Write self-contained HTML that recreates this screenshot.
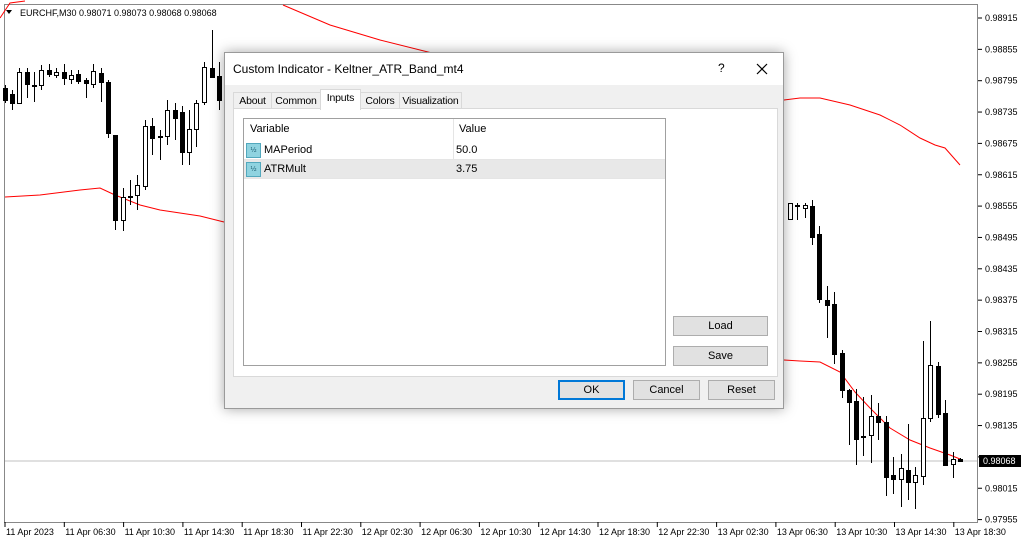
<!DOCTYPE html>
<html><head><meta charset="utf-8"><style>
body{margin:0;width:1024px;height:544px;overflow:hidden;background:#fff;font-family:"Liberation Sans",sans-serif;position:relative}
.dlg{position:absolute;left:224px;top:52px;width:558px;height:355px;background:#f0f0f0;border:1px solid #9a9a9a;box-shadow:0 0 12px rgba(0,0,0,.35);font-size:11px;color:#000}
.title{position:absolute;left:0;top:0;width:558px;height:32px;background:#fff}
.title span{position:absolute;left:8px;top:9px;font-size:12px}
.tab{position:absolute;top:39px;height:16px;border:1px solid #d9d9d9;border-bottom:none;background:#f0f0f0;text-align:center;line-height:16px;font-size:10.5px;letter-spacing:-0.2px;white-space:nowrap}
.panel{position:absolute;left:8px;top:55px;width:543px;height:267px;background:#fff;border:1px solid #d9d9d9}
.grid{position:absolute;left:9px;top:9px;width:421px;height:246px;border:1px solid #a0a0a0;background:#fff}
.row{position:absolute;left:0;width:421px;height:18px;line-height:18px;border-bottom:1px solid #e5e5e5}
.btn{position:absolute;height:18px;border:1px solid #adadad;background:#e1e1e1;text-align:center;line-height:18px}
.ic{position:absolute;left:2px;top:2px;width:13px;height:13px;background:#8fd3e0;border:1px solid #52a8bd;font-size:7px;line-height:13px;text-align:center;color:#1c5f73}
</style></head><body>
<svg id="ch" width="1024" height="544" style="position:absolute;left:0;top:0">
<rect x="4.5" y="4.5" width="973" height="518" fill="none" stroke="#888"/>
<line x1="5" y1="461" x2="977" y2="461" stroke="#c0c0c0"/>
<polyline fill="none" stroke="#f00" points="0,18 10,3 25,1"/>
<polyline fill="none" stroke="#f00" points="283,5 330,25 380,40 440,55"/>
<polyline fill="none" stroke="#f00" points="784,100 800,98 820,98 850,105 880,115 900,125 920,138 935,145 945,148 960,165"/>
<polyline fill="none" stroke="#f00" points="5,197 40,195 80,190 100,188 115,195 140,205 160,210 200,216 224,222"/>
<polyline fill="none" stroke="#f00" points="784,360 800,361 820,362 840,372 855,392 870,408 890,428 910,440 930,448 950,455 960,459"/>
<g id="cd"></g>
<text x="20" y="16" font-size="9" font-family="Liberation Sans">EURCHF,M30  0.98071 0.98073 0.98068 0.98068</text>
<polygon points="6,10 12,10 9,14" fill="#000"/>
<g id="ax" font-size="9" font-family="Liberation Sans"></g>
<rect x="979" y="455" width="42" height="12" fill="#000"/>
<text x="983" y="464" font-size="9" fill="#fff" font-family="Liberation Sans">0.98068</text>
</svg>
<div class="dlg">
<div class="title"><span>Custom Indicator - Keltner_ATR_Band_mt4</span>
<span style="left:493px;top:8px">?</span>
<svg style="position:absolute;left:531px;top:10px" width="12" height="12"><path d="M1 1L11 11M11 1L1 11" stroke="#000" stroke-width="1.2"/></svg></div>
<div class="tab" style="left:8px;width:37px">About</div>
<div class="tab" style="left:46px;width:48px">Common</div>
<div class="tab" style="left:135px;width:38px">Colors</div>
<div class="tab" style="left:174px;width:61px">Visualization</div>
<div class="panel">
<div class="grid">
<div class="row" style="top:0;height:21px;line-height:21px;border-bottom:none"><span style="position:absolute;left:6px">Variable</span><span style="position:absolute;left:215px">Value</span></div>
<div style="position:absolute;left:209px;top:0;width:1px;height:60px;background:#e5e5e5"></div>
<div class="row" style="top:22px"><div class="ic">½</div><span style="position:absolute;left:20px">MAPeriod</span><span style="position:absolute;left:212px">50.0</span></div>
<div class="row" style="top:41px;background:#e8e8e8"><div class="ic">½</div><span style="position:absolute;left:20px">ATRMult</span><span style="position:absolute;left:212px">3.75</span></div>
</div>
<div class="btn" style="left:439px;top:207px;width:93px">Load</div>
<div class="btn" style="left:439px;top:237px;width:93px">Save</div>
</div>
<div class="tab" style="left:95px;top:36px;width:39px;height:20px;background:#fff;z-index:2">Inputs</div>
<div class="btn" style="left:333px;top:327px;width:65px;border-color:#0078d7;box-shadow:inset 0 0 0 1px #0078d7">OK</div>
<div class="btn" style="left:408px;top:327px;width:65px">Cancel</div>
<div class="btn" style="left:483px;top:327px;width:65px">Reset</div>
</div>
<script>
var c=[[5,88,100,85,103,0],[12,94,103,90,110,0],[19,72,103,68,103,1],[27,72,84,68,98,0],[34,85,86,72,102,1],[41,70,85,65,90,1],[49,70,74,64,77,0],[56,72,75,68,78,1],[64,72,78,64,85,0],[71,75,79,70,84,1],[78,74,81,70,84,0],[86,80,83,78,98,0],[93,71,84,64,88,1],[101,73,82,68,102,0],[108,82,133,80,138,0],[115,135,220,135,230,0],[123,197,220,188,231,1],[130,196,197,180,205,1],[137,185,195,175,210,1],[145,126,186,120,190,1],[152,126,138,118,155,0],[160,136,137,130,160,1],[167,110,136,100,145,1],[175,110,118,103,140,0],[182,112,152,106,165,0],[189,129,152,110,165,1],[196,103,129,100,147,1],[204,67,102,62,105,1],[212,68,77,30,78,0],[219,76,100,62,110,0],
[790,203,219,203,220,1],[797,205,206,203,220,1],[805,205,208,203,218,1],[812,206,237,200,245,0],[819,234,299,226,303,0],[827,300,305,286,338,0],[834,304,354,292,364,0],[842,353,390,350,398,0],[849,390,402,389,445,0],[856,401,439,389,465,0],[863,436,437,397,456,1],[871,416,435,395,463,1],[878,416,422,403,440,0],[886,422,477,416,496,0],[893,475,479,457,494,0],[901,468,479,454,507,1],[908,470,482,424,500,0],[915,475,482,467,509,1],[923,418,476,341,485,1],[930,365,418,321,422,1],[938,366,414,362,418,0],[945,413,465,400,466,0],[953,459,464,452,478,1],[960,459,461,458,462,0]];
var s='';c.forEach(function(k){s+='<line x1="'+(k[0]+.5)+'" y1="'+k[3]+'" x2="'+(k[0]+.5)+'" y2="'+k[4]+'" stroke="#000"/>';
s+='<rect x="'+(k[0]-1.5)+'" y="'+(k[1]+.5)+'" width="4" height="'+Math.max(1,k[2]-k[1])+'" fill="'+(k[5]?'#fff':'#000')+'" stroke="#000"/>';});
document.getElementById('cd').innerHTML=s;
var a='',p=['0.98915','0.98855','0.98795','0.98735','0.98675','0.98615','0.98555','0.98495','0.98435','0.98375','0.98315','0.98255','0.98195','0.98135','0.98075','0.98015','0.97955'];
p.forEach(function(t,i){var y=18+i*31.35;if(i!=14)a+='<text x="985" y="'+(y+3)+'">'+t+'</text>';a+='<line x1="978" y1="'+y+'" x2="982" y2="'+y+'" stroke="#000"/>';});
var d=['11 Apr 2023','11 Apr 06:30','11 Apr 10:30','11 Apr 14:30','11 Apr 18:30','11 Apr 22:30','12 Apr 02:30','12 Apr 06:30','12 Apr 10:30','12 Apr 14:30','12 Apr 18:30','12 Apr 22:30','13 Apr 02:30','13 Apr 06:30','13 Apr 10:30','13 Apr 14:30','13 Apr 18:30'];
d.forEach(function(t,i){var x=5+i*59.3;a+='<text x="'+(x+1)+'" y="535">'+t+'</text><line x1="'+x+'" y1="522" x2="'+x+'" y2="527" stroke="#000"/>';});
document.getElementById('ax').innerHTML=a;
</script>
</body></html>
